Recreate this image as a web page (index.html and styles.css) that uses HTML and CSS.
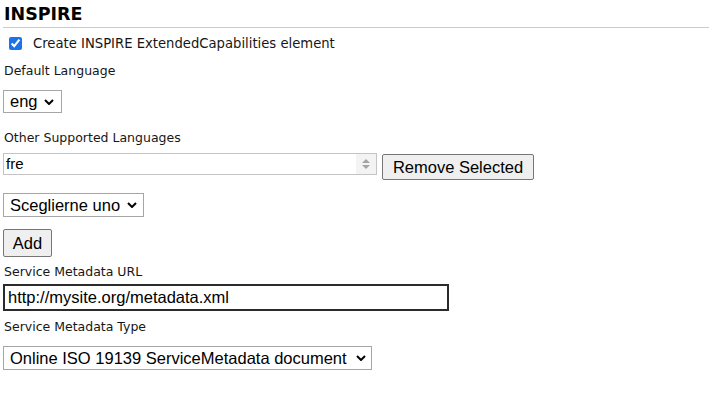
FILE: index.html
```html
<!DOCTYPE html>
<html>
<head>
<meta charset="utf-8">
<link rel="stylesheet" href="styles.css">
</head>
<body>
<div class="panel">
  <h3 class="title">INSPIRE</h3>
  <label class="check-row"><input type="checkbox" class="check" checked><span>Create INSPIRE ExtendedCapabilities element</span></label>
  <div class="label lbl-default">Default Language</div>
  <div class="sel-wrap sel-wrap-eng"><span class="sel sel-eng">eng<svg class="chev" viewBox="0 0 10 6"><path d="M1 1 L5 5 L9 1" fill="none" stroke="#000" stroke-width="2"/></svg></span></div>
  <div class="label lbl-other">Other Supported Languages</div>
  <div class="row">
    <div class="listbox"><span class="opt">fre</span><span class="spin"><svg viewBox="0 0 10 14"><path d="M1 6 L5 2 L9 6 Z M1 8 L5 12 L9 8 Z" fill="#a3a3a3"/></svg></span></div>
    <button class="btn btn-remove">Remove Selected</button>
  </div>
  <div class="sel-wrap sel-wrap-pick"><span class="sel sel-pick">Sceglierne uno<svg class="chev" viewBox="0 0 10 6"><path d="M1 1 L5 5 L9 1" fill="none" stroke="#000" stroke-width="2"/></svg></span></div>
  <div class="add-wrap"><button class="btn btn-add">Add</button></div>
  <div class="label lbl-url">Service Metadata URL</div>
  <div class="text-input">http://mysite.org/metadata.xml</div>
  <div class="label lbl-type">Service Metadata Type</div>
  <div class="sel-wrap sel-wrap-type"><span class="sel sel-type">Online ISO 19139 ServiceMetadata document<svg class="chev" viewBox="0 0 10 6"><path d="M1 1 L5 5 L9 1" fill="none" stroke="#000" stroke-width="2"/></svg></span></div>
</div>
</body>
</html>
```
FILE: styles.css
```css
html, body { margin: 0; padding: 0; background: #fff; }
body { font-family: "DejaVu Sans", Verdana, sans-serif; color: #161616; }
.panel { padding: 0 0 0 3px; }
.title {
  margin: 0;
  font-size: 17.5px;
  line-height: 20px;
  font-weight: bold;
  padding: 4px 0 0 1px;
  height: 23px;
  border-bottom: 1px solid #c2dc8e;
  color: #000;
}
.check-row { display: flex; align-items: center; height: 13px; margin-top: 9px; font-size: 13.2px; }
.check { width: 13px; height: 13px; margin: 0 11px 0 6px; accent-color: #1a73e8; }
.label { font-size: 12.5px; height: 15px; line-height: 15px; padding-left: 1px; }
.lbl-default { margin-top: 13px; }
.lbl-other { margin-top: 17px; }
.lbl-url { margin-top: 7px; }
.lbl-type { margin-top: 8px; }
.sel-wrap { display: flex; }
.sel-wrap-eng { margin-top: 12px; }
.sel-wrap-pick { margin-top: 13px; }
.sel-wrap-type { margin-top: 12px; }
.sel {
  display: flex; align-items: center; justify-content: space-between; box-sizing: border-box;
  border: 1px solid #a6a6a6; background: #fff;
  font-family: "Liberation Sans", Arial, sans-serif; font-size: 16.5px; color: #000;
  padding: 0 6px 0 6px;
}
.chev { width: 10px; height: 6px; margin-left: 6px; flex: none; }
.sel-eng { width: 59px; height: 23px; padding-right: 8px; }
.sel-pick { width: 141px; height: 24px; }
.sel-type { width: 369px; height: 24px; padding-right: 5px; }
.row { display: flex; align-items: flex-start; margin-top: 8px; gap: 5px; height: 27px; }
.listbox {
  box-sizing: border-box; width: 374px; height: 22px; border: 1px solid #c4c4c4;
  display: flex; justify-content: space-between; align-items: stretch;
  font-family: "Liberation Sans", Arial, sans-serif; font-size: 15px; color: #000;
}
.opt { padding-left: 2px; line-height: 19px; }
.spin { width: 20px; background: #f3f3f3; display: flex; align-items: center; justify-content: center; }
.spin svg { width: 10px; height: 14px; }
.btn {
  box-sizing: border-box; padding: 0;
  font-family: "Liberation Sans", Arial, sans-serif; font-size: 16.5px; color: #000;
  background: #efefef; border: 1px solid #767676; border-radius: 2px; margin: 0;
}
.btn-remove { width: 152px; height: 26px; margin-top: 1px; }
.add-wrap { margin-top: 12px; display: flex; }
.btn-add { width: 49px; height: 28px; }
.text-input {
  box-sizing: border-box; width: 446px; height: 27px; margin-top: 5px;
  border: 2px solid #2b2b2b; padding-left: 3px;
  font-family: "Liberation Sans", Arial, sans-serif; font-size: 16.5px; line-height: 23px; color: #000;
}
```
